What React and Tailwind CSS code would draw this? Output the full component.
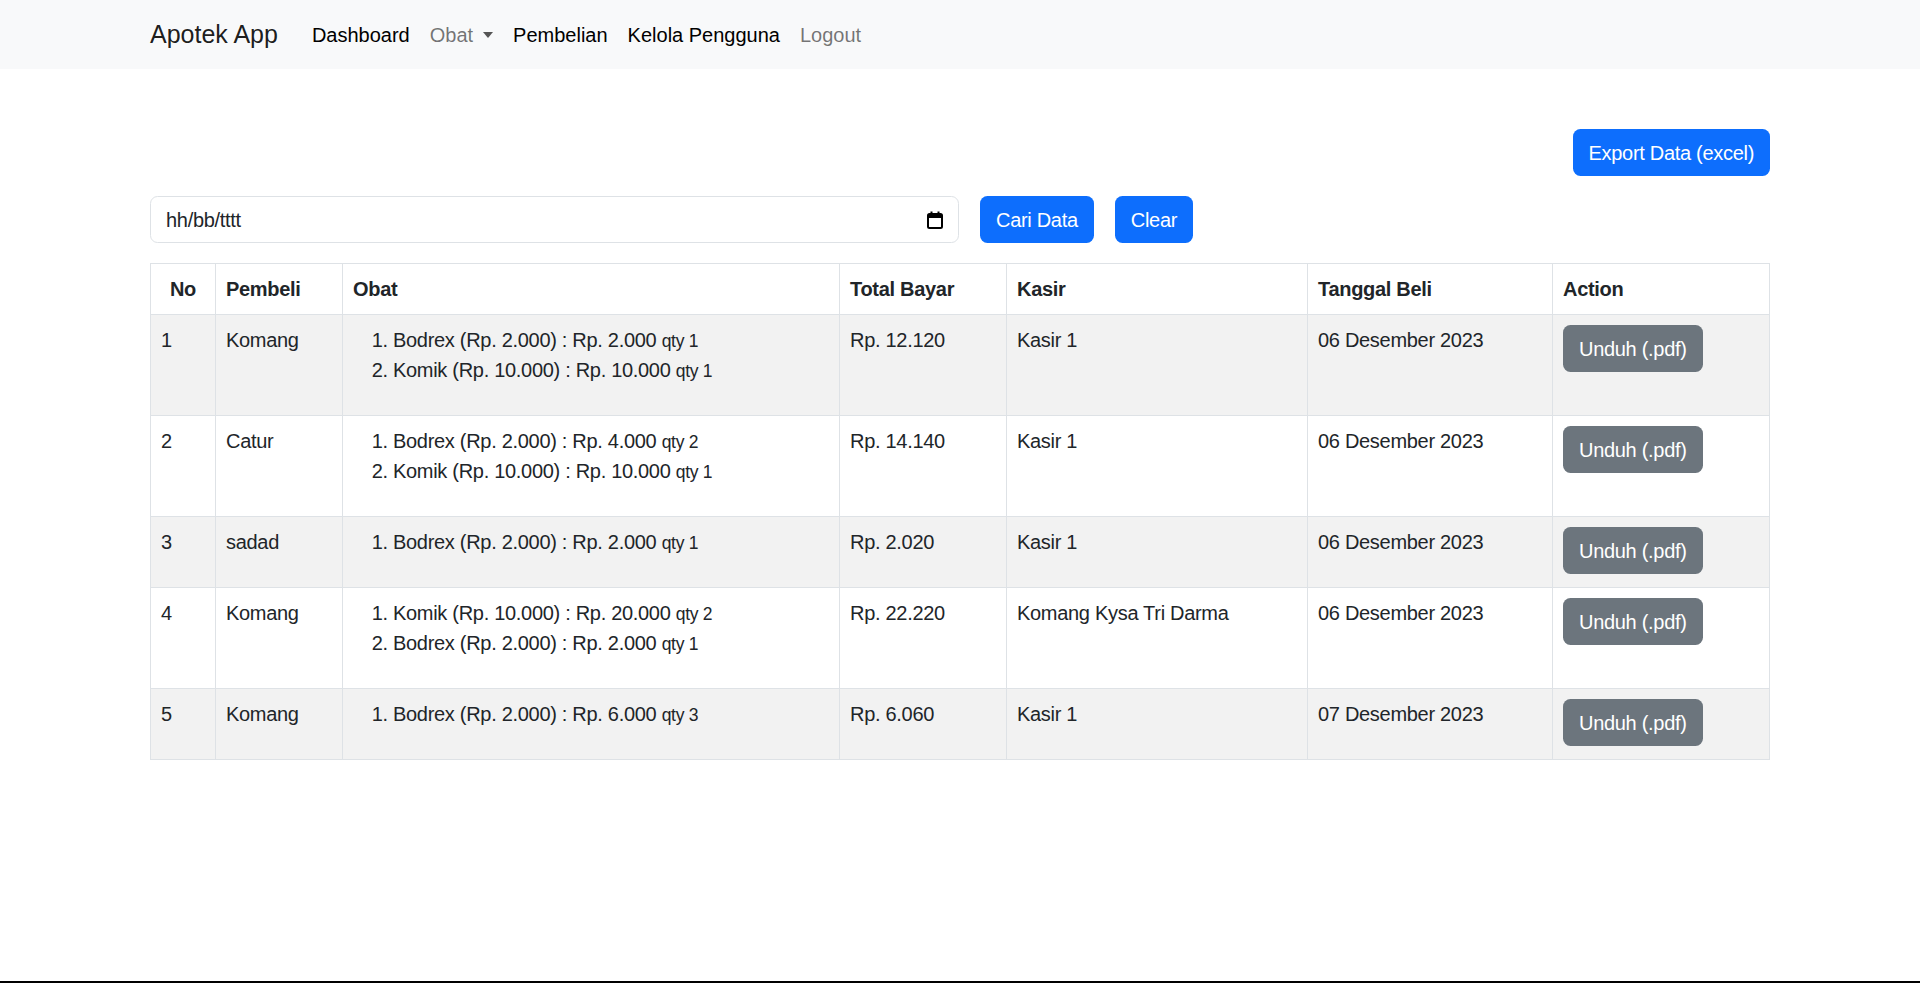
import React from 'react'

const rows = [
  {
    no: 1,
    pembeli: 'Komang',
    obat: [
      ['Bodrex (Rp. 2.000) : Rp. 2.000', 'qty 1'],
      ['Komik (Rp. 10.000) : Rp. 10.000', 'qty 1'],
    ],
    total: 'Rp. 12.120',
    kasir: 'Kasir 1',
    tanggal: '06 Desember 2023',
  },
  {
    no: 2,
    pembeli: 'Catur',
    obat: [
      ['Bodrex (Rp. 2.000) : Rp. 4.000', 'qty 2'],
      ['Komik (Rp. 10.000) : Rp. 10.000', 'qty 1'],
    ],
    total: 'Rp. 14.140',
    kasir: 'Kasir 1',
    tanggal: '06 Desember 2023',
  },
  {
    no: 3,
    pembeli: 'sadad',
    obat: [['Bodrex (Rp. 2.000) : Rp. 2.000', 'qty 1']],
    total: 'Rp. 2.020',
    kasir: 'Kasir 1',
    tanggal: '06 Desember 2023',
  },
  {
    no: 4,
    pembeli: 'Komang',
    obat: [
      ['Komik (Rp. 10.000) : Rp. 20.000', 'qty 2'],
      ['Bodrex (Rp. 2.000) : Rp. 2.000', 'qty 1'],
    ],
    total: 'Rp. 22.220',
    kasir: 'Komang Kysa Tri Darma',
    tanggal: '06 Desember 2023',
  },
  {
    no: 5,
    pembeli: 'Komang',
    obat: [['Bodrex (Rp. 2.000) : Rp. 6.000', 'qty 3']],
    total: 'Rp. 6.060',
    kasir: 'Kasir 1',
    tanggal: '07 Desember 2023',
  },
]

function CalendarIcon() {
  return (
    <svg width="16" height="18" viewBox="0 0 16 18" fill="none">
      <rect x="1" y="3" width="14" height="14" rx="1.5" stroke="#000" strokeWidth="2" />
      <rect x="1" y="3" width="14" height="4" fill="#000" />
      <rect x="3.5" y="0.5" width="2" height="3" fill="#000" />
      <rect x="10.5" y="0.5" width="2" height="3" fill="#000" />
    </svg>
  )
}

function Navbar() {
  const link = 'px-[10px] text-[20px] leading-[30px]'
  return (
    <nav className="h-[69px] bg-[#f8f9fa] tracking-normal">
      <div className="mx-auto flex h-full w-[1620px] items-center">
        <span className="mr-[24px] text-[25px] leading-[37px] text-black/90">Apotek App</span>
        <div className="flex items-center">
          <a className={`${link} text-black`}>Dashboard</a>
          <a className={`${link} flex items-center text-black/55`}>
            Obat
            <span className="ml-[10px] inline-block h-0 w-0 border-x-[5.5px] border-t-[6px] border-x-transparent border-t-[#555]" />
          </a>
          <a className={`${link} text-black`}>Pembelian</a>
          <a className={`${link} text-black`}>Kelola Pengguna</a>
          <a className={`${link} text-black/55`}>Logout</a>
        </div>
      </div>
    </nav>
  )
}

export default function App() {
  const cell = 'border border-[#dee2e6] px-[10px] py-[10px] align-top'
  const btn = 'rounded-[7.5px] border border-transparent px-[15px] py-[7.5px] text-[20px] leading-[30px] text-white'

  return (
    <div className="flex min-h-screen flex-col bg-white font-['Liberation_Sans',Arial,sans-serif] text-[20px] leading-[30px] tracking-[-0.015em] text-[#212529]">
      <Navbar />

      <main className="mx-auto w-[1620px] pt-[60px]">
        <div className="flex justify-end">
          <button className={`${btn} bg-[#0d6efd]`}>Export Data (excel)</button>
        </div>

        <div className="mt-[20px] flex items-center gap-[21px]">
          <div className="flex h-[47px] w-[809px] items-center justify-between rounded-[7.5px] border border-[#dee2e6] px-[15px]">
            <span>hh/bb/tttt</span>
            <CalendarIcon />
          </div>
          <button className={`${btn} bg-[#0d6efd]`}>Cari Data</button>
          <button className={`${btn} bg-[#0d6efd]`}>Clear</button>
        </div>

        <table className="mt-[20px] w-full table-fixed border-collapse border border-[#dee2e6]">
          <colgroup>
            <col className="w-[65px]" />
            <col className="w-[127px]" />
            <col className="w-[497px]" />
            <col className="w-[167px]" />
            <col className="w-[301px]" />
            <col className="w-[245px]" />
            <col />
          </colgroup>
          <thead>
            <tr>
              <th className={`${cell} text-center font-bold`}>No</th>
              <th className={`${cell} text-left font-bold`}>Pembeli</th>
              <th className={`${cell} text-left font-bold`}>Obat</th>
              <th className={`${cell} text-left font-bold`}>Total Bayar</th>
              <th className={`${cell} text-left font-bold`}>Kasir</th>
              <th className={`${cell} text-left font-bold`}>Tanggal Beli</th>
              <th className={`${cell} text-left font-bold`}>Action</th>
            </tr>
          </thead>
          <tbody>
            {rows.map((r, i) => (
              <tr key={r.no} className={i % 2 === 0 ? 'bg-[#f2f2f2]' : 'bg-white'}>
                <td className={cell}>{r.no}</td>
                <td className={cell}>{r.pembeli}</td>
                <td className={cell}>
                  <ol className="mb-5 list-decimal pl-10">
                    {r.obat.map(([item, qty]) => (
                      <li key={item} className="h-[30px]">
                        {item} <small className="text-[17.5px] leading-none">{qty}</small>
                      </li>
                    ))}
                  </ol>
                </td>
                <td className={cell}>{r.total}</td>
                <td className={cell}>{r.kasir}</td>
                <td className={cell}>{r.tanggal}</td>
                <td className={cell}>
                  <button className={`${btn} bg-[#6c757d]`}>Unduh (.pdf)</button>
                </td>
              </tr>
            ))}
          </tbody>
        </table>
      </main>

      <div className="mt-auto h-[2px] bg-black" />
    </div>
  )
}
